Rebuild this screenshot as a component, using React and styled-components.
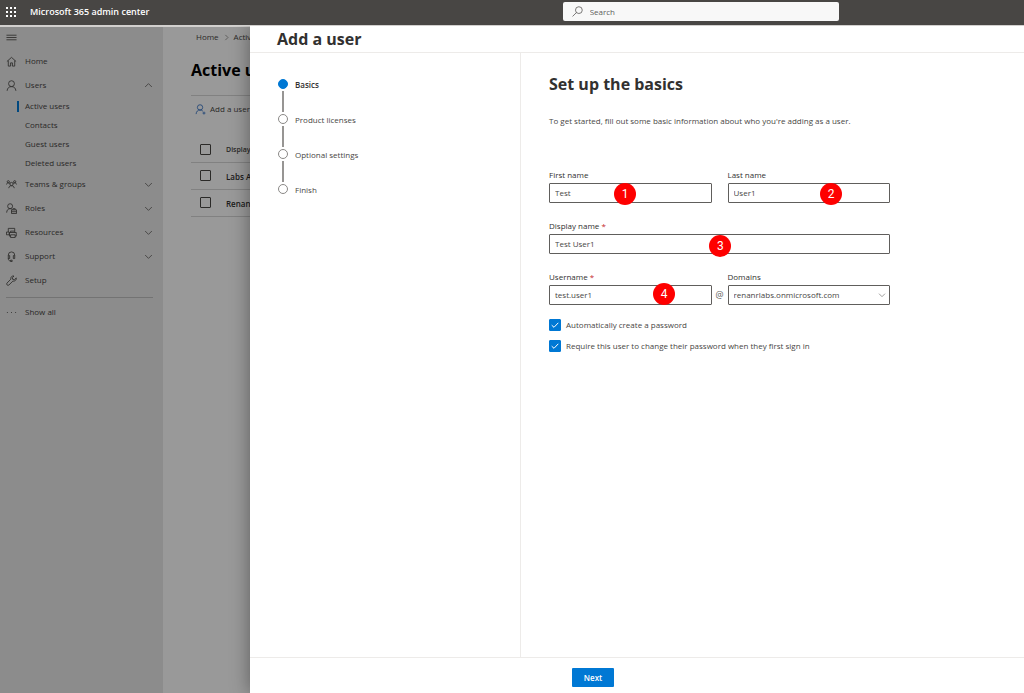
import React, { useState } from 'react';
import styled, { createGlobalStyle } from 'styled-components';

const blue = '#0078d4';
const ink = '#323130';
const soft = '#484644';
const line = '#edebe9';

const GlobalStyle = createGlobalStyle`
  * {
    box-sizing: border-box;
  }
  body {
    margin: 0;
    color: ${soft};
    font-family: "Open Sans", "Noto Sans", sans-serif;
    font-size: 8px;
    line-height: 12px;
  }
  h1, h2, p, ul, ol {
    margin: 0;
    padding: 0;
  }
  ul, ol {
    list-style: none;
  }
  a {
    color: inherit;
    text-decoration: none;
  }
  button, input, select {
    color: inherit;
    font: inherit;
  }
`;

const Page = styled.div`
  display: flex;
  flex-direction: column;
  min-height: 100vh;
`;

const TopBar = styled.header`
  display: flex;
  align-items: center;
  height: 25px;
  padding: 0 6px 2px;
  background: #484644;
  color: #fff;
`;

const TopSide = styled.div`
  display: flex;
  flex: 56 1 0;
  align-items: center;
  gap: 14px;
`;

const TopRest = styled.div`
  flex: 18 1 0;
`;

const IconButton = styled.button`
  display: flex;
  padding: 0;
  border: 0;
  background: none;
`;

const Brand = styled.a`
  font-size: 9px;
  font-weight: 600;
`;

const SearchBox = styled.label`
  display: flex;
  flex: 26 1 0;
  align-items: center;
  gap: 7px;
  height: 19px;
  padding: 0 9px;
  border-radius: 2px;
  background: #f8f8f8;
  color: #605e5c;
`;

const SearchInput = styled.input`
  flex: 1;
  min-width: 0;
  padding: 0;
  border: 0;
  outline: 0;
  background: none;
  &::placeholder {
    color: #605e5c;
    opacity: 1;
  }
`;

const Workspace = styled.div`
  position: relative;
  display: flex;
  flex: 1;
  border-top: 2px solid #d2d0ce;
`;

const Sidebar = styled.nav`
  width: 163px;
  padding: 3px 10px 0 6px;
  background: #e9e9e9;
`;

const MenuRow = styled.div`
  display: flex;
  align-items: center;
  height: 14px;
  margin-bottom: 5px;
`;

const NavLink = styled.a`
  display: flex;
  align-items: center;
  gap: 8px;
  height: 24px;
`;

const NavLabel = styled.span`
  flex: 1;
`;

const SubList = styled.ul`
  display: flex;
  flex-direction: column;
  gap: 1px;
  padding-left: 11px;
`;

const SubLink = styled.a`
  display: flex;
  align-items: center;
  gap: 6px;
  height: 18px;
  &::before {
    content: "";
    width: 2px;
    height: 11px;
    background: ${props => (props.$active ? blue : 'transparent')};
  }
`;

const NavRule = styled.hr`
  height: 1px;
  margin: 5px 0 2px;
  border: 0;
  background: #c0c0c0;
`;

const Main = styled.main`
  flex: 1;
  padding: 4px 28px;
  background: #fff;
`;

const Crumbs = styled.div`
  display: flex;
  align-items: center;
  gap: 4px;
  padding-left: 5px;
`;

const ListTitle = styled.h1`
  margin: 16px 0 14px;
  color: #000;
  font-size: 16px;
  line-height: 22px;
  font-weight: 700;
`;

const Toolbar = styled.div`
  display: flex;
  align-items: center;
  height: 27px;
  padding-left: 4px;
  border-top: 1px solid #d8d8d8;
`;

const ToolButton = styled.button`
  display: flex;
  align-items: center;
  gap: 4px;
  padding: 0;
  border: 0;
  background: none;
`;

const UserTable = styled.table`
  width: 100%;
  margin-top: 13px;
  border-collapse: collapse;
  text-align: left;
`;

const Row = styled.tr`
  height: 27px;
  border-bottom: 1px solid #d8d8d8;
`;

const HeadCell = styled.th`
  padding: 3px 0 0;
  font-size: 7px;
  font-weight: 600;
`;

const Cell = styled.td`
  padding: 3px 0 0;
  color: ${ink};
  font-weight: 600;
`;

const PickCell = styled.td`
  width: 35px;
  padding: ${props => (props.$head ? 3 : 0)}px 0 0 9px;
`;

const PickBox = styled.input`
  display: block;
  appearance: none;
  width: 11px;
  height: 11px;
  margin: 0;
  border: 1px solid #484644;
  border-radius: 1px;
`;

const Shade = styled.div`
  position: absolute;
  inset: 0;
  background: rgba(0, 0, 0, 0.4);
`;

const Panel = styled.section`
  position: absolute;
  inset: -1px 0 0 250px;
  display: flex;
  flex-direction: column;
  background: #fff;
  box-shadow: 0 0 18px rgba(0, 0, 0, 0.4);
  clip-path: inset(0 0 0 -60px);
`;

const PanelHead = styled.div`
  height: 27px;
  padding: 1px 27px 0;
  border-bottom: 1px solid ${line};
`;

const PanelTitle = styled.h2`
  color: ${ink};
  font-size: 16px;
  line-height: 24px;
  font-weight: 700;
`;

const PanelBody = styled.div`
  display: flex;
  flex: 1;
`;

const Steps = styled.ol`
  width: 271px;
  padding: 26px 28px;
  border-right: 1px solid ${line};
`;

const Step = styled.li`
  display: flex;
  gap: 7px;
  height: 35px;
  color: ${props => (props.$current ? ink : soft)};
  font-weight: ${props => (props.$current ? 600 : 400)};
`;

const StepMark = styled.span`
  display: flex;
  flex-direction: column;
  align-items: center;
  gap: 2px;
  width: 10px;
`;

const StepDot = styled.span`
  width: 10px;
  height: 10px;
  border: 1px solid ${props => (props.$current ? blue : '#8a8886')};
  border-radius: 50%;
  background: ${props => (props.$current ? blue : '#fff')};
`;

const StepLine = styled.span`
  width: 2px;
  height: 21px;
  background: #979593;
`;

const Content = styled.div`
  flex: 1;
  padding: 19px 28px;
`;

const Form = styled.form`
  display: grid;
  grid-template-columns: 1fr 16px 1fr;
  row-gap: 17px;
  max-width: 341px;
  margin-top: 42px;
`;

const FormTitle = styled.h2`
  margin-bottom: 19px;
  color: ${ink};
  font-size: 16px;
  line-height: 24px;
  font-weight: 700;
`;

const Field = styled.div`
  position: relative;
  display: flex;
  flex-direction: column;
  gap: 2px;
  grid-column: ${props => (props.$wide ? '1 / -1' : 'auto')};
`;

const FieldLabel = styled.label`
  color: ${ink};
`;

const Star = styled.span`
  color: #c4262c;
`;

const TextInput = styled.input`
  width: 100%;
  height: 20px;
  padding: 0 5px 2px;
  border: 1px solid #605e5c;
  border-radius: 1px;
  background: #fff;
`;

const Select = styled.select`
  appearance: none;
  width: 100%;
  height: 20px;
  padding: 0 5px 1px;
  border: 1px solid #605e5c;
  border-radius: 1px;
  background: #fff;
`;

const SelectArrow = styled.span`
  position: absolute;
  right: 4px;
  bottom: 6px;
  display: flex;
  color: #605e5c;
  pointer-events: none;
`;

const Badge = styled.span`
  position: absolute;
  bottom: ${props => props.$drop || 0}px;
  left: ${props => props.$at}%;
  width: 22px;
  height: 22px;
  border-radius: 50%;
  background: #fe0000;
  color: #fff;
  font-family: Roboto, sans-serif;
  font-size: 12px;
  line-height: 22px;
  text-align: center;
`;

const Gap = styled.span`
  align-self: end;
  color: #605e5c;
  font-size: 9px;
  line-height: 20px;
  text-align: center;
`;

const Options = styled.div`
  display: flex;
  flex-direction: column;
  gap: 9px;
  margin-top: 14px;
`;

const Option = styled.label`
  display: flex;
  align-items: center;
  gap: 5px;
  height: 12px;
`;

const CheckWrap = styled.span`
  position: relative;
  display: flex;
  color: #fff;
`;

const CheckBox = styled.input`
  appearance: none;
  width: 12px;
  height: 12px;
  margin: 0;
  border: 1px solid ${blue};
  border-radius: 1px;
  &:checked {
    background: ${blue};
  }
`;

const Tick = styled.svg`
  position: absolute;
  top: 2px;
  left: 2px;
  pointer-events: none;
`;

const PanelFoot = styled.div`
  display: flex;
  height: 36px;
  padding: 10px 322px;
  border-top: 1px solid ${line};
`;

const NextButton = styled.button`
  width: 42px;
  height: 19px;
  padding: 0;
  border: 0;
  border-radius: 1px;
  background: ${blue};
  color: #fff;
  font-weight: 600;
`;

const paths = {
  home: <path d="M1 6 6 1.500l5 4.500M2.500 5v6H5V7.500h2V11h2.500V5" />,
  user: <><circle cx="6" cy="4" r="3.200" /><path d="M1.200 11.800C1.500 8.700 3.300 7.200 6 7.200s4.500 1.500 4.800 4.600" /></>,
  teams: <><circle cx="6" cy="5.500" r="1.800" /><circle cx="2.500" cy="3" r="1.200" /><circle cx="9.500" cy="3" r="1.200" /><path d="M3 10c.3-2 1.400-2.700 3-2.700S8.700 8 9 10M.5 6c.2-1.200 1-1.800 2-1.800s1.500.4 2 1M11.500 6c-.2-1.200-1-1.800-2-1.800s-1.500.4-2 1" /></>,
  roles: <><circle cx="4.500" cy="3.500" r="2.700" /><path d="M.7 10.500C.9 7.700 2.300 6.200 4.500 6.200c.7 0 1.200.1 1.700.4M6 7.500h5.500v4H6zM7.500 7.500V6.200H10v1.300M6 9.500h5.500" /></>,
  resources: <><path d="M2.500 5.500v-4h7v3M.5 5.500h3v3h-3zM5 6V4.500h4.500V6M5 10H3.800V6h7.400v4H10M5 8.500h5v3H5z" /></>,
  support: <><path d="M2.500 5V4.500a3.500 3.500 0 0 1 7 0V5M2.500 5H4v3.200H2.500zM9.500 5H8v3.200h1.500zM2.500 8c0 1.800.7 2.800 2.500 2.800M5 10h1.700v1.500H5z" /></>,
  wrench: <path d="M11.200 3.200 9.300 5 7.200 4.700 7 3l1.700-1.900C6.800.6 4.800 2.200 5.300 4.500L1 8.900c-1 1.300.8 3.100 2.100 2.100l4.400-4.300c2.200.4 4.200-1.500 3.700-3.500z" />,
  more: <path d="M1 6h1M5.500 6h1M10 6h1" />,
  menu: <path d="M.5 3.500h11M.5 6h11M.5 8.500h11" />,
  down: <path d="M1.500 4 6 8.500 10.500 4" />,
  up: <path d="M1.500 8 6 3.500 10.500 8" />,
  right: <path d="M4 1.500 8.500 6 4 10.500" />,
  search: <><circle cx="7.500" cy="4.500" r="3.700" /><path d="M5 7 .6 11.400" /></>,
  addUser: <><circle cx="5.500" cy="3.700" r="2.900" /><path d="M1.200 11C1.500 8 3 6.600 5.500 6.600c1.300 0 2.400.4 3.100 1.200M9.800 8.300v3.200M8.200 9.900h3.200" /></>,
};

function Icon({ name, size = 11, color = 'currentColor' }) {
  return (
    <svg width={size} height={size} viewBox="0 0 12 12" fill="none" stroke={color} strokeWidth="0.9" aria-hidden="true">
      {paths[name]}
    </svg>
  );
}

function Waffle() {
  return (
    <svg width="10" height="10" viewBox="0 0 10 10" fill="#fff" aria-hidden="true">
      {[0, 4, 8].map(y => [0, 4, 8].map(x => <rect key={`${x}${y}`} x={x} y={y} width="2" height="2" />))}
    </svg>
  );
}

const subItems = ['Active users', 'Contacts', 'Guest users', 'Deleted users'];
const groups = [
  ['teams', 'Teams & groups', true],
  ['roles', 'Roles', true],
  ['resources', 'Resources', true],
  ['support', 'Support', true],
  ['wrench', 'Setup', false],
];
const steps = ['Basics', 'Product licenses', 'Optional settings', 'Finish'];

function NavItem({ icon, label, arrow }) {
  return (
    <NavLink href="#">
      <Icon name={icon} />
      <NavLabel>{label}</NavLabel>
      {arrow && <Icon name={arrow} size={9} />}
    </NavLink>
  );
}

function TextField({ id, label, value, onChange, required, wide, badge, at, drop }) {
  return (
    <Field $wide={wide}>
      <FieldLabel htmlFor={id}>{label}{required && <Star> *</Star>}</FieldLabel>
      <TextInput id={id} name={id} value={value} onChange={onChange} required={required} />
      <Badge $at={at} $drop={drop}>{badge}</Badge>
    </Field>
  );
}

function CheckOption({ label }) {
  return (
    <Option>
      <CheckWrap>
        <CheckBox type="checkbox" defaultChecked />
        <Tick width="8" height="8" viewBox="0 0 8 8" fill="none" stroke="currentColor">
          <path d="M.7 4.200 3 6.300 7.300 1.800" />
        </Tick>
      </CheckWrap>
      {label}
    </Option>
  );
}

export default function App() {
  const [user, setUser] = useState({
    first: 'Test',
    last: 'User1',
    display: 'Test User1',
    username: 'test.user1',
  });
  const change = e => setUser({ ...user, [e.target.name]: e.target.value });

  return (
    <Page>
      <GlobalStyle />
      <TopBar>
        <TopSide>
          <IconButton aria-label="App launcher"><Waffle /></IconButton>
          <Brand href="#">Microsoft 365 admin center</Brand>
        </TopSide>
        <SearchBox>
          <Icon name="search" size={11} />
          <SearchInput type="search" placeholder="Search" aria-label="Search" />
        </SearchBox>
        <TopRest />
      </TopBar>
      <Workspace>
        <Sidebar>
          <MenuRow>
            <IconButton aria-label="Collapse navigation"><Icon name="menu" /></IconButton>
          </MenuRow>
          <NavItem icon="home" label="Home" />
          <NavItem icon="user" label="Users" arrow="up" />
          <SubList>
            {subItems.map((item, i) => (
              <li key={item}><SubLink href="#" $active={i === 0}>{item}</SubLink></li>
            ))}
          </SubList>
          {groups.map(([icon, label, open]) => (
            <NavItem key={label} icon={icon} label={label} arrow={open && 'down'} />
          ))}
          <NavRule />
          <NavItem icon="more" label="Show all" />
        </Sidebar>
        <Main>
          <Crumbs>
            <a href="#">Home</a>
            <Icon name="right" size={7} />
            <span>Active users</span>
          </Crumbs>
          <ListTitle>Active users</ListTitle>
          <Toolbar>
            <ToolButton><Icon name="addUser" color="#2f6fc4" />Add a user</ToolButton>
          </Toolbar>
          <UserTable>
            <thead>
              <Row>
                <PickCell $head><PickBox type="checkbox" aria-label="Select all" /></PickCell>
                <HeadCell>Display name</HeadCell>
              </Row>
            </thead>
            <tbody>
              {['Labs A', 'Renan'].map(name => (
                <Row key={name}>
                  <PickCell><PickBox type="checkbox" aria-label={name} /></PickCell>
                  <Cell>{name}</Cell>
                </Row>
              ))}
            </tbody>
          </UserTable>
        </Main>
        <Shade />
        <Panel>
          <PanelHead>
            <PanelTitle>Add a user</PanelTitle>
          </PanelHead>
          <PanelBody>
            <Steps>
              {steps.map((step, i) => (
                <Step key={step} $current={i === 0}>
                  <StepMark>
                    <StepDot $current={i === 0} />
                    {i < steps.length - 1 && <StepLine />}
                  </StepMark>
                  {step}
                </Step>
              ))}
            </Steps>
            <Content>
              <FormTitle>Set up the basics</FormTitle>
              <p>To get started, fill out some basic information about who you're adding as a user.</p>
              <Form>
                <TextField id="first" label="First name" value={user.first} onChange={change} badge="1" at={40} drop={-2} />
                <Gap />
                <TextField id="last" label="Last name" value={user.last} onChange={change} badge="2" at={57} drop={-2} />
                <TextField id="display" label="Display name" value={user.display} onChange={change} required wide badge="3" at={47} drop={-3} />
                <TextField id="username" label="Username" value={user.username} onChange={change} required badge="4" at={64} />
                <Gap>@</Gap>
                <Field>
                  <FieldLabel htmlFor="domain">Domains</FieldLabel>
                  <Select id="domain">
                    <option>renanrlabs.onmicrosoft.com</option>
                  </Select>
                  <SelectArrow><Icon name="down" size={8} /></SelectArrow>
                </Field>
              </Form>
              <Options>
                <CheckOption label="Automatically create a password" />
                <CheckOption label="Require this user to change their password when they first sign in" />
              </Options>
            </Content>
          </PanelBody>
          <PanelFoot>
            <NextButton>Next</NextButton>
          </PanelFoot>
        </Panel>
      </Workspace>
    </Page>
  );
}
